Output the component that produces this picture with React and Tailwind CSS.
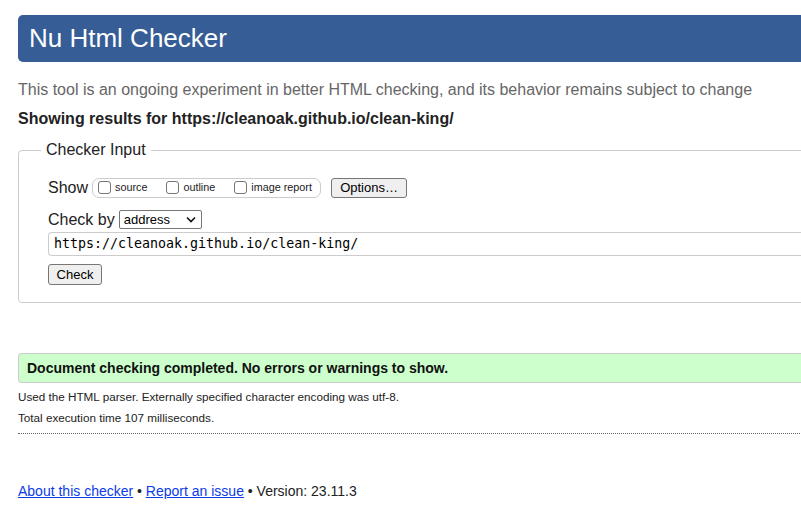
import React from "react";

const Box = ({ label }) => (
  <span className="flex items-center">
    <span className="w-[13px] h-[13px] border border-[#767676] rounded-[3px] bg-white" />
    <span className="ml-[4px] text-[10.8px] text-[#222]">{label}</span>
  </span>
);

const Btn = ({ children, className = "" }) => (
  <span
    className={`flex items-center justify-center border border-[#767676] rounded-[3px] bg-[#efefef] text-[13px] text-black ${className}`}
  >
    {children}
  </span>
);

const App = () => {
  return (
    <div className="w-[801px] h-[513px] overflow-hidden bg-white font-['Liberation_Sans',Arial,sans-serif] text-[#222]">
      <div className="w-[920px] pl-[18px] pt-[15px]">
        <h1 className="h-[47px] flex items-center pl-[11px] rounded-l-[5px] bg-[#365d95] text-white text-[26px] font-normal">
          Nu Html Checker
        </h1>

        <p className="mt-[19px] text-[16px] leading-[18px] text-[#666]">
          This tool is an ongoing experiment in better HTML checking, and its behavior remains subject to change
        </p>
        <p className="mt-[11px] text-[16px] leading-[18px] font-bold text-[#222]">
          Showing results for https://cleanoak.github.io/clean-king/
        </p>

        <fieldset className="mt-[13px] border border-[#ccc] rounded-l-[4px] pl-[22px] pb-[17px]">
          <legend className="px-[5px] text-[16px] leading-[18px] text-[#222]">Checker Input</legend>
          <div className="pl-[7px] mt-[19px]">
            <div className="flex items-center h-[19px]">
              <span className="text-[16px] leading-[19px]">Show</span>
              <span className="ml-[4px] h-[20px] w-[229px] flex items-center gap-[19px] border border-[#ccc] rounded-[7px] pl-[5px]">
                <Box label="source" />
                <Box label="outline" />
                <Box label="image report" />
              </span>
              <Btn className="ml-[10px] h-[20px] w-[76px]">Options…</Btn>
            </div>

            <div className="flex items-center h-[19px] mt-[13px]">
              <span className="text-[16px] leading-[19px]">Check by</span>
              <span className="ml-[4px] h-[19px] w-[83px] flex items-center justify-between border border-[#767676] rounded-[2px] bg-white pl-[4px] pr-[5px] text-[13px] text-black">
                address
                <svg width="10" height="7" viewBox="0 0 10 7" fill="none">
                  <path d="M1 1.5 L5 5.5 L9 1.5" stroke="#111" strokeWidth="1.6" />
                </svg>
              </span>
            </div>

            <div className="mt-[3px] h-[24px] flex items-center border border-[#ccc] border-r-0 rounded-l-[4px] pl-[5px] font-['DejaVu_Sans_Mono',monospace] text-[13.3px] text-black">
              https://cleanoak.github.io/clean-king/
            </div>

            <Btn className="mt-[8px] h-[21px] w-[54px]">Check</Btn>
          </div>
        </fieldset>

        <div className="mt-[50px] h-[30px] flex items-center pl-[8px] bg-[#ccffcc] border-y border-l border-[#ccc] rounded-l-[4px] text-[14px] font-bold text-[#111]">
          Document checking completed. No errors or warnings to show.
        </div>

        <p className="mt-[7px] text-[11.7px] leading-[14px]">
          Used the HTML parser. Externally specified character encoding was utf-8.
        </p>
        <p className="mt-[7px] text-[11.7px] leading-[14px]">Total execution time 107 milliseconds.</p>
        <div className="mt-[8px] border-b border-dotted border-[#666]" />

        <p className="mt-[49px] text-[14px] leading-[16px] text-[#222]">
          <a href="#about" className="text-[#0b3be6] underline">About this checker</a>
          {" • "}
          <a href="#report" className="text-[#0b3be6] underline">Report an issue</a>
          {" • Version: 23.11.3"}
        </p>
      </div>
    </div>
  );
};

export default App;
